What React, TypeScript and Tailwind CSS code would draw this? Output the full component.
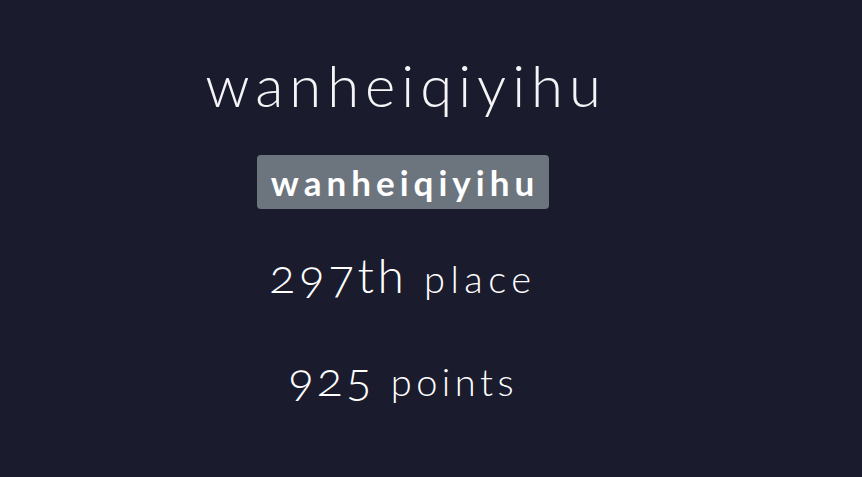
import React from "react";

const font = { fontFamily: "Lato, 'Open Sans', sans-serif" };

const App: React.FC = () => {
  return (
    <div className="min-h-screen w-full bg-[#1a1c2e] text-white" style={font}>
      <div className="w-[806px] flex flex-col items-center pt-[49px]">
        <h1 className="text-[58px] leading-[72px] font-light tracking-[6px] pl-[6px] text-[#f5f5f7]">
          wanheiqiyihu
        </h1>
        <span className="mt-[34px] h-[54px] pl-[14px] pr-[10px] rounded-[4px] bg-[#6c757d] flex items-center text-[35px] leading-[42px] font-bold tracking-[5px] text-white">
          wanheiqiyihu
        </span>
        <p className="mt-[36px] text-[48px] leading-[60px] font-light oldstyle-nums tracking-[3.5px]">
          297th{" "}
          <span className="text-[38px] tracking-[5.5px]">place</span>
        </p>
        <p className="mt-[40px] text-[48px] leading-[60px] font-light oldstyle-nums tracking-[3px]">
          925{" "}
          <span className="text-[38px] tracking-[4.5px]">points</span>
        </p>
      </div>
    </div>
  );
};

export default App;
